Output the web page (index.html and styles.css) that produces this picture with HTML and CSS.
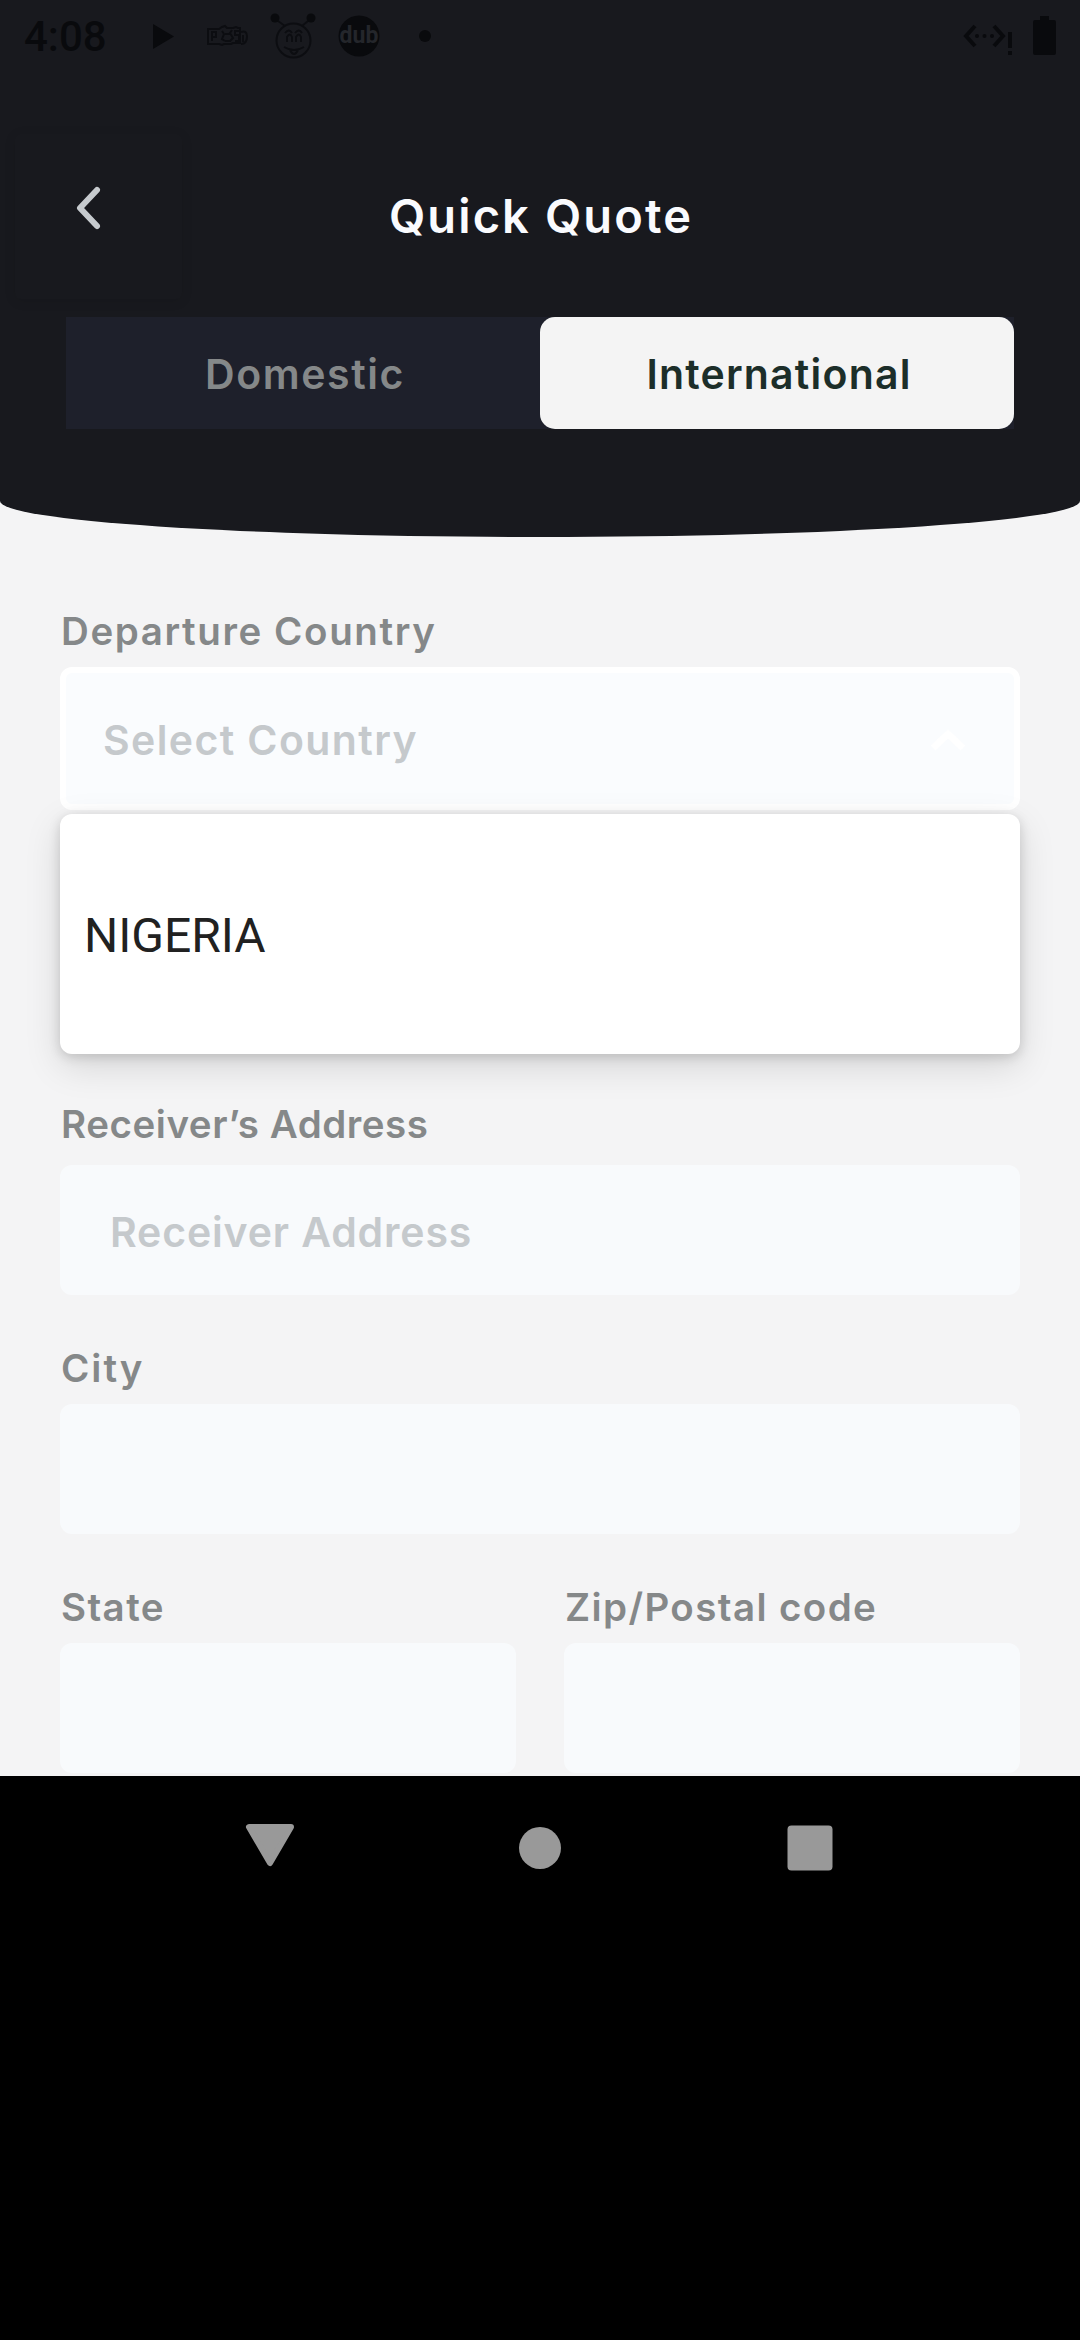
FILE: index.html
```html
<!DOCTYPE html>
<html lang="en">
<head>
<meta charset="utf-8">
<title>Quick Quote</title>
<link rel="stylesheet" href="styles.css">
</head>
<body>
<div class="screen">
  <header class="header">
    <div class="status">
      <span class="clock">4:08</span>
      <svg class="status-left" width="310" height="72" viewBox="140 0 310 72">
        <path class="ink" d="M153 24v25l21-12.500z"/>
        <g class="line">
          <path d="M208 29h11l3-2 3-1 2 2h6l3-1 2 1h2v15h-7l-2 1h-7l-2 1-3-1h-11zM241 32q6-2 6 4.500q0 7.500-6 7.500M243 35v7"/>
          <path d="M212 41v-9h4v5h-3M222 31l2 3-2 5 3 2 M232 30l-2 3 3 5-3 3M225 34h6M225 41h6M239 31h-4v4h4v6h-4"/>
          <circle cx="293.500" cy="40.500" r="17"/>
          <path d="M278 21l7 5M308 21l-6 5M287 42v-5q3-5 5 0v5M296 42v-5q3-5 5 0v5M284 47q10 6 20 0M290 50q4 8 8 0M285 33q4-5 7 0M295 33q4-5 7 0"/>
        </g>
        <circle class="ink" cx="275" cy="18" r="4.500"/><circle class="ink" cx="311" cy="18" r="4.500"/>
        <circle class="ink" cx="359" cy="36" r="20.500"/><circle class="ink" cx="425" cy="36" r="6"/>
        <text class="dub" x="359" y="43" text-anchor="middle">dub</text>
      </svg>
      <svg class="status-right" width="120" height="72" viewBox="960 0 120 72">
        <path class="net" d="M975 26l-9 10 9 10M994 26l9 10-9 10"/>
        <path class="ink" d="M1008 32h4v16h-4zM1008 51h4v4h-4zM1040 16h9v4h5q2 0 2 2v31q0 2-2 2h-19q-2 0-2-2V22q0-2 2-2h5z"/>
        <circle class="ink" cx="977" cy="36" r="2"/><circle class="ink" cx="984.500" cy="36" r="2"/><circle class="ink" cx="992" cy="36" r="2"/>
      </svg>
    </div>
    <div class="bar">
      <div class="back"><svg width="30" height="48" viewBox="0 0 30 48"><path d="M22 6L5 24l17 18"/></svg></div>
      <h1 class="title">Quick Quote</h1>
    </div>
    <div class="tabs">
      <div class="tab">Domestic</div>
      <div class="tab active">International</div>
    </div>
  </header>
  <main class="form">
    <div class="label departure">Departure Country</div>
    <div class="select"><span>Select Country</span><svg width="36" height="24" viewBox="0 0 36 24"><path d="M3 20L18 6l15 14"/></svg>
      <div class="menu">NIGERIA</div>
    </div>
    <div class="label receiver">Receiver’s Address</div>
    <div class="field">Receiver Address</div>
    <div class="label city">City</div>
    <div class="field"></div>
    <div class="row">
      <div class="col"><div class="label">State</div><div class="field"></div></div>
      <div class="col"><div class="label">Zip/Postal code</div><div class="field"></div></div>
    </div>
  </main>
  <nav class="nav">
    <svg width="1080" height="100" viewBox="0 0 1080 100"><path class="tri" d="M249 51h42l-21 36z"/><circle cx="540" cy="72" r="21"/><rect x="787.500" y="49.500" width="45" height="45" rx="4"/></svg>
  </nav>
</div>
</body>
</html>
```
FILE: styles.css
```css
* { box-sizing: border-box; }
body { margin: 0; background: #000; font-family: Inter, "Liberation Sans", sans-serif; font-weight: 600; }
.screen { width: 1080px; height: 2340px; overflow: hidden; display: flex; flex-direction: column; background: #f4f4f5; }
.header { height: 537px; flex: none; background: #18191e; border-radius: 0 0 540px 540px / 0 0 36px 36px; }
.status { height: 72px; display: flex; align-items: center; padding-left: 24px; }
.clock { width: 116px; font: 500 42px/72px Roboto, sans-serif; color: #090a0d; padding-top: 2px; }
.status-right { margin-left: 510px; }
.ink { fill: #090a0d; }
.line { fill: none; stroke: #0c0d11; stroke-width: 2; }
.net { fill: none; stroke: #090a0d; stroke-width: 4; }
.dub { font: 700 23px Roboto, sans-serif; fill: #24262b; }
.bar { height: 245px; display: grid; grid-template-columns: 182px 1fr 182px; padding-top: 62px; align-items: start; }
.back { margin-left: 15px; width: 167px; height: 165px; display: flex; align-items: center; justify-content: center; padding: 0 18px 18px 0; border-radius: 6px; box-shadow: 0 2px 12px rgba(0, 0, 0, .1); }
.back path { fill: none; stroke: #c6cace; stroke-width: 6; stroke-linecap: round; stroke-linejoin: round; }
.title { margin: 0; padding-top: 52px; text-align: center; font-size: 47px; line-height: 60px; font-weight: 600; letter-spacing: 2.1px; color: #fafbfe; text-indent: 2px; }
.tabs { margin: 0 66px; height: 112px; display: grid; grid-template-columns: 1fr 1fr; background: #1e202b; }
.tab { display: flex; align-items: center; justify-content: center; font-size: 41px; letter-spacing: 1.6px; color: #858889; padding: 2px 0 0 4px; }
.active { background: #f4f4f4; color: #1c2e29; border-radius: 15px; letter-spacing: 1.2px; }
.form { height: 1239px; flex: none; padding: 70px 60px 0; overflow: hidden; }
.label { height: 60px; padding-left: 1px; font-size: 38.5px; line-height: 48px; letter-spacing: 1.4px; color: #858889; }
.departure { letter-spacing: 1.6px; }
.city { letter-spacing: 2px; }
.select { position: relative; height: 143px; border: 6px solid #fff; border-radius: 12px; background: #fafcfe; display: flex; align-items: center; justify-content: space-between; padding: 3px 48px 0 37px; font-size: 41px; letter-spacing: 1.4px; color: #c5c9cc; }
.select path { fill: none; stroke: #fff; stroke-width: 7; }
.menu { position: absolute; left: -6px; top: 141px; width: 960px; height: 240px; display: flex; align-items: center; padding: 4px 0 0 24px; background: #fff; border-radius: 12px; box-shadow: 0 12px 36px rgba(0, 0, 0, .13), 0 3px 12px rgba(0, 0, 0, .15); font: 400 48px/60px Roboto, sans-serif; letter-spacing: 0; color: #212121; }
.receiver { margin-top: 290px; height: 65px; letter-spacing: .55px; }
.field { height: 130px; margin-bottom: 49px; display: flex; align-items: center; padding: 3px 0 0 50px; border-radius: 12px; background: #f8fafc; font-size: 41px; letter-spacing: .85px; color: #c5c9cc; }
.row { display: grid; grid-template-columns: 1fr 1fr; gap: 48px; }
.nav { flex: 1; background: #000; }
.nav svg { display: block; fill: #999; }
.tri { stroke: #999; stroke-width: 6; stroke-linejoin: round; }
```
